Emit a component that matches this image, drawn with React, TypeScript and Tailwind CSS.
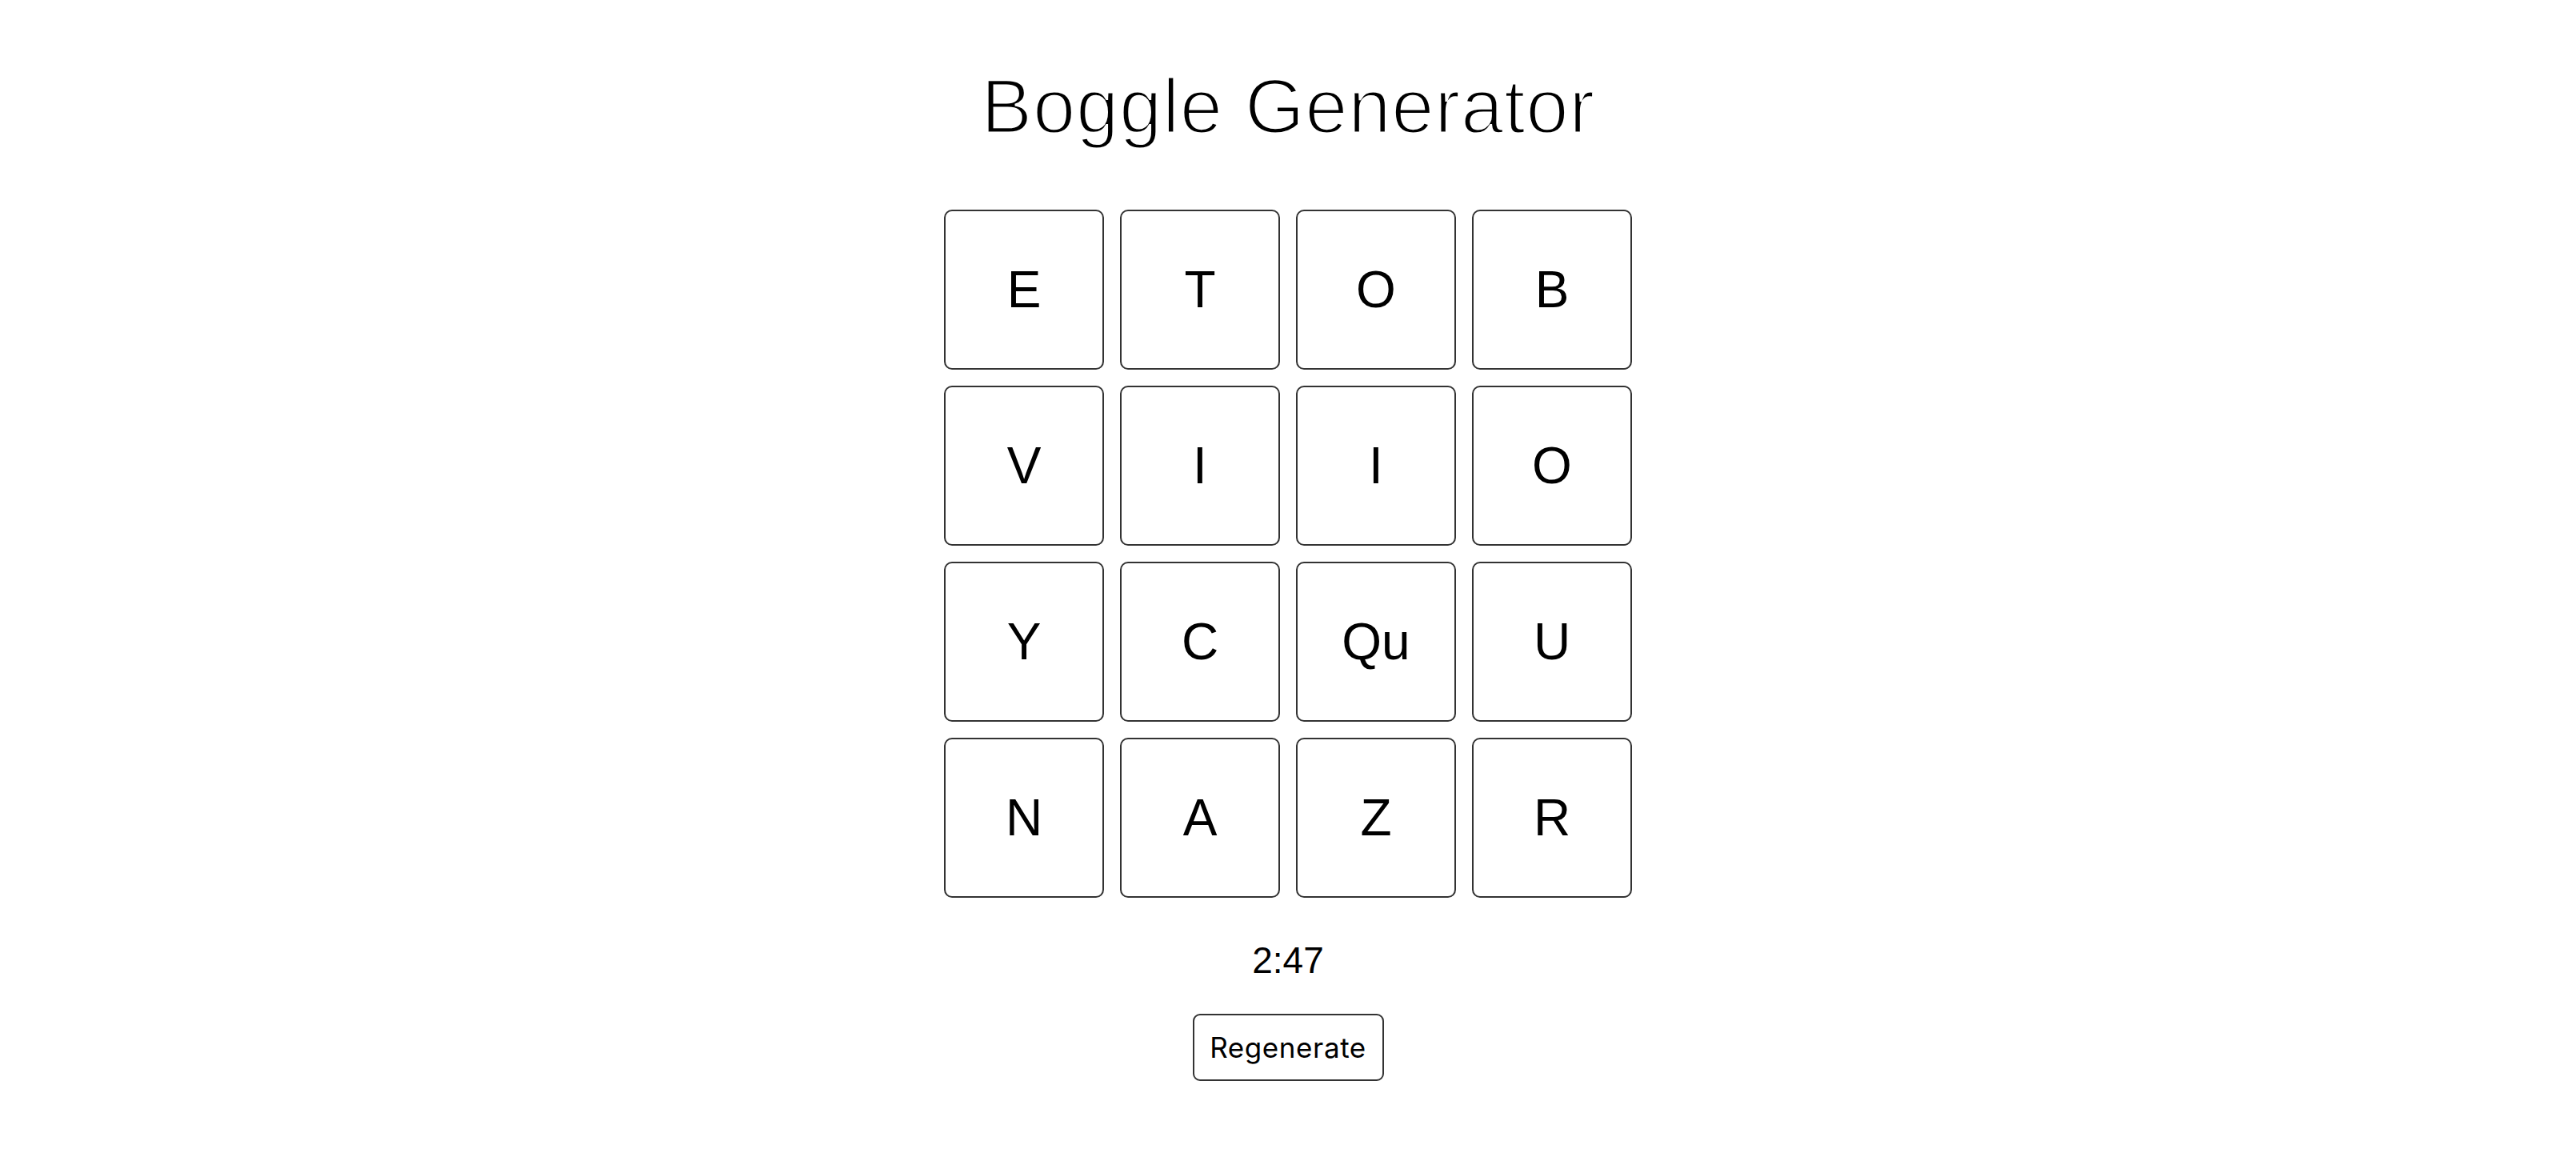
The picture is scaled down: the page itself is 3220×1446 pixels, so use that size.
import React from 'react';

const board: string[][] = [
  ['E', 'T', 'O', 'B'],
  ['V', 'I', 'I', 'O'],
  ['Y', 'C', 'Qu', 'U'],
  ['N', 'A', 'Z', 'R'],
];

const Tile: React.FC<{ letter: string }> = ({ letter }) => (
  <div className="w-[200px] h-[200px] flex items-center justify-center border-2 border-[#333] rounded-[10px] text-[64px] leading-none text-black">
    {letter}
  </div>
);

const App: React.FC = () => {
  return (
    <div className="min-h-screen bg-white flex flex-col items-center font-['Liberation_Sans',Arial,sans-serif] text-black">
      {/* Title */}
      <h1 className="mt-[85px] text-[96px] leading-none font-normal tracking-[0.6px] [-webkit-text-stroke:3px_white]">
        Boggle Generator
      </h1>

      {/* Board */}
      <div className="mt-[81px] grid grid-cols-4 gap-[20px]">
        {board.flat().map((letter, index) => (
          <Tile key={index} letter={letter} />
        ))}
      </div>

      {/* Timer */}
      <div className="mt-[55px] text-[46px] leading-none">2:47</div>

      <button className="mt-[44px] w-[239px] h-[84px] flex items-center justify-center border-2 border-[#333] rounded-[9px] bg-white text-[35px] tracking-[0.6px] leading-none font-['Inter',sans-serif] text-black">
        Regenerate
      </button>
    </div>
  );
};

export default App;
